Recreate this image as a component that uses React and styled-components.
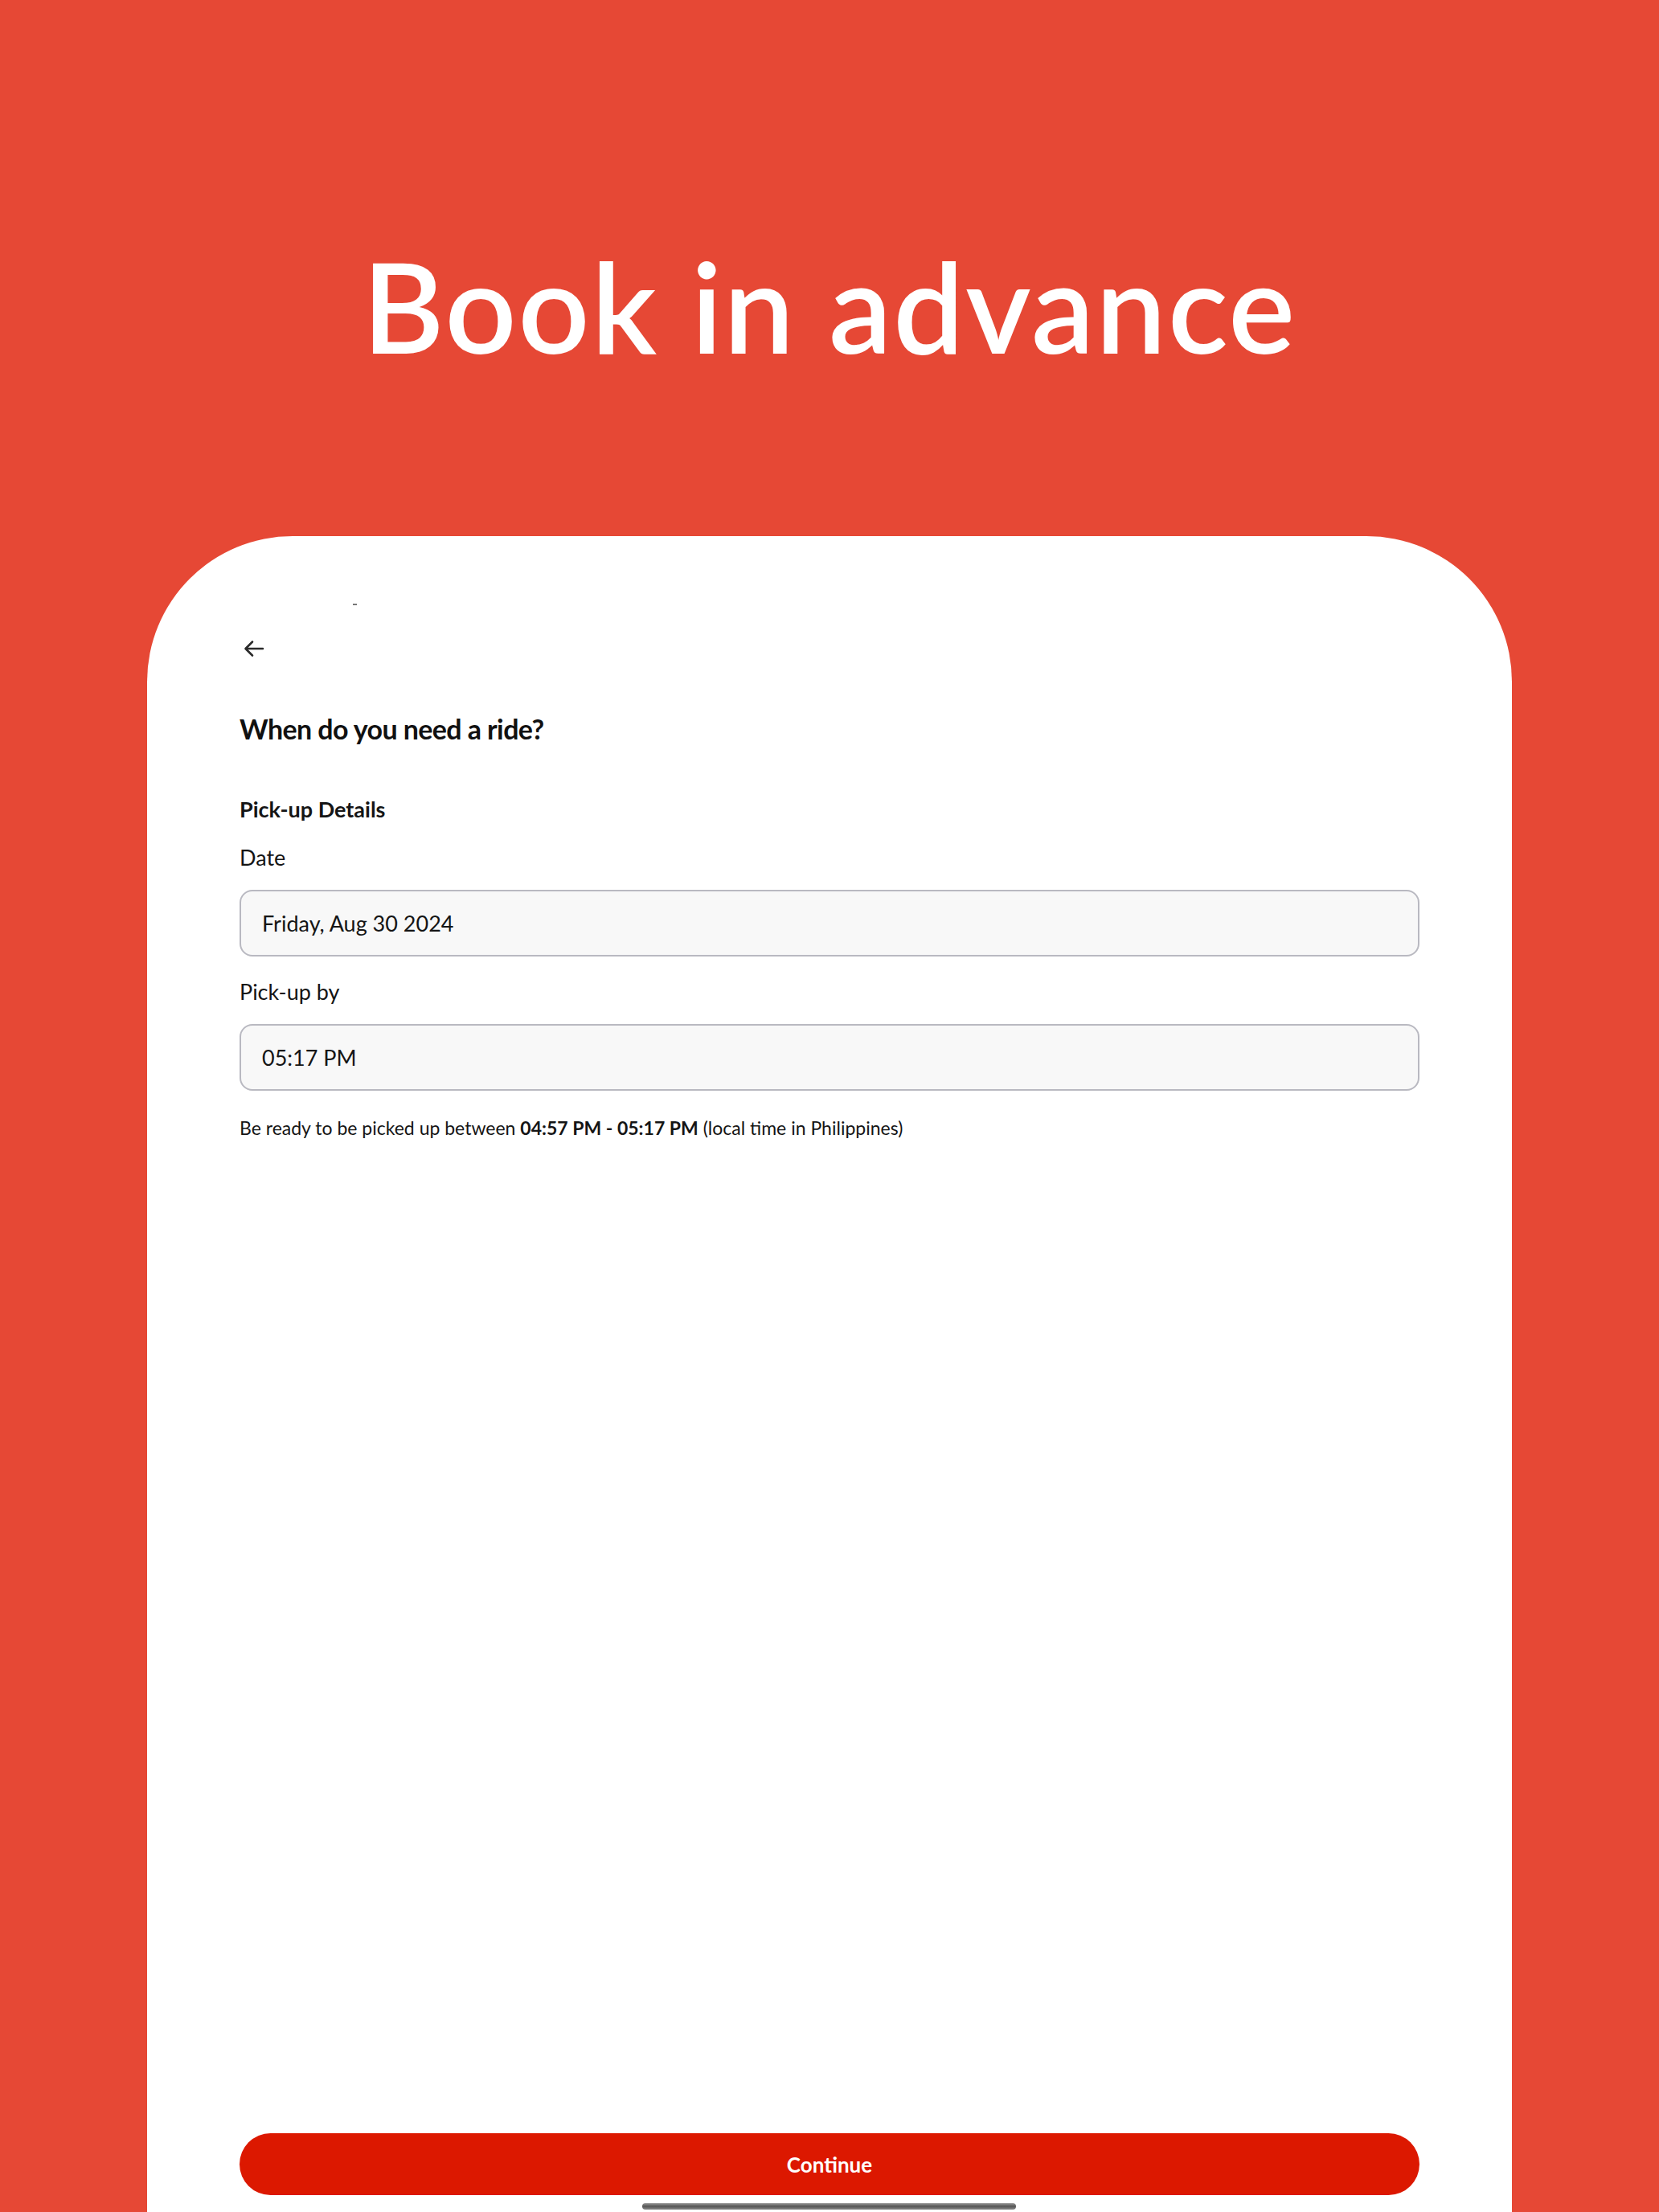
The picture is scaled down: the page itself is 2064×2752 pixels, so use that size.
import styled, { createGlobalStyle } from 'styled-components';

const GlobalStyle = createGlobalStyle`
  html, body {
    margin: 0;
    padding: 0;
    background: #e64835;
  }
  * {
    box-sizing: border-box;
  }
`;

const App = () => {
  return (
    <Page>
      <GlobalStyle />
      <Hero>
        <Title>Book in advance</Title>
      </Hero>

      <Card>
        <StatusDash />
        <BackButton aria-label="Back">
          <svg width="28" height="28" viewBox="0 0 28 28" fill="none">
            <path d="M25 14H4M12 5.5L3.5 14L12 22.5" stroke="#2b2b2b" strokeWidth="2.6" strokeLinecap="round" strokeLinejoin="round" />
          </svg>
        </BackButton>

        <Heading>When do you need a ride?</Heading>

        <SectionTitle>Pick-up Details</SectionTitle>

        <Label>Date</Label>
        <Field>Friday, Aug 30 2024</Field>

        <Label $top="26px">Pick-up by</Label>
        <Field>05:17 PM</Field>

        <Hint>
          Be ready to be picked up between <b>04:57 PM - 05:17 PM</b> (local time in Philippines)
        </Hint>

        <Spacer />

        <ContinueButton>Continue</ContinueButton>
        <HomeBar />
      </Card>
    </Page>
  );
};

export default App;

const Page = styled.div`
  min-height: 2752px;
  display: flex;
  flex-direction: column;
  align-items: center;
  background: #e64835;
  font-family: "Lato", "Noto Sans", sans-serif;
`;

const Hero = styled.div`
  height: 667px;
  width: 100%;
  display: flex;
  justify-content: center;
  padding-top: 280px;
`;

const Title = styled.h1`
  margin: 0;
  height: 200px;
  line-height: 200px;
  font-size: 156px;
  font-weight: 600;
  color: #ffffff;
  letter-spacing: 2px;
`;

const Card = styled.div`
  width: 1698px;
  flex: 1;
  display: flex;
  flex-direction: column;
  background: #ffffff;
  border-radius: 181px 181px 0 0;
  padding: 0 115px;
  color: #151515;
`;

const StatusDash = styled.div`
  width: 5px;
  height: 2px;
  margin: 84px 0 0 141px;
  background: #777;
`;

const BackButton = styled.div`
  width: 28px;
  height: 28px;
  margin: 40px 0 0 4px;
  display: flex;
`;

const Heading = styled.h2`
  margin: 64px 0 0;
  font-size: 34px;
  line-height: 44px;
  font-weight: 700;
  letter-spacing: -0.6px;
  color: #111;
`;

const SectionTitle = styled.div`
  margin-top: 60px;
  font-size: 27px;
  line-height: 36px;
  font-weight: 700;
`;

const Label = styled.div`
  margin-top: ${(p) => p.$top || '24px'};
  font-size: 27px;
  line-height: 36px;
  font-weight: 400;
`;

const Field = styled.div`
  margin-top: 22px;
  height: 83px;
  display: flex;
  align-items: center;
  padding: 0 26px;
  background: #f8f8f8;
  border: 2px solid #b9b9c1;
  border-radius: 16px;
  font-size: 27px;
  color: #151515;
`;

const Hint = styled.div`
  margin-top: 30px;
  font-size: 23px;
  line-height: 32px;

  b {
    font-weight: 700;
  }
`;

const Spacer = styled.div`
  flex: 1;
`;

const ContinueButton = styled.button`
  height: 77px;
  width: 100%;
  border: none;
  border-radius: 39px;
  background: #dc1800;
  color: #ffffff;
  font-family: inherit;
  font-size: 26px;
  font-weight: 700;
  cursor: pointer;
`;

const HomeBar = styled.div`
  align-self: center;
  width: 465px;
  height: 8px;
  margin: 10px 0 3px -1px;
  border-radius: 4px;
  background: linear-gradient(#9a9a9a, #555 50%, #8a8a8a);
`;
